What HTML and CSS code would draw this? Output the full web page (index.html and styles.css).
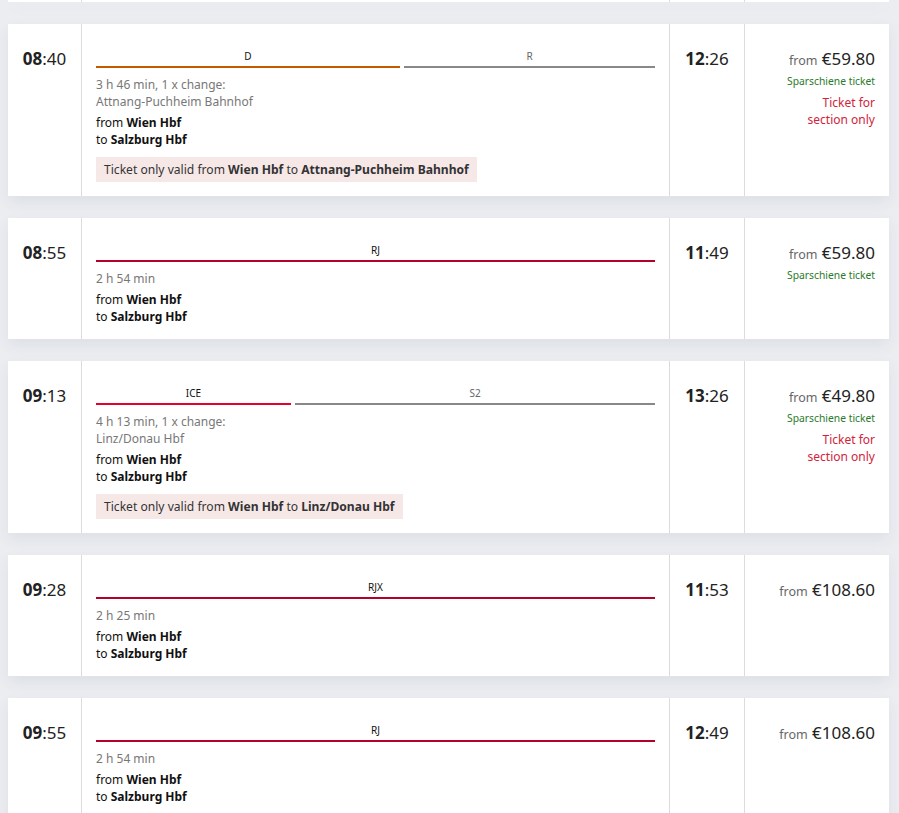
FILE: index.html
```html
<!DOCTYPE html>
<html lang="en">
<head>
    <meta charset="UTF-8">
    <meta name="viewport" content="width=device-width, initial-scale=1.0">
    <title>Connections - Wien Hbf to Salzburg Hbf</title>
    <link rel="stylesheet" href="styles.css">
</head>
<body>
    <div class="results">
        <!-- previous connection, scrolled mostly out of view -->
        <div class="connection connection-stub">
            <div class="col-dep"></div>
            <div class="col-journey"></div>
            <div class="col-arr"></div>
            <div class="col-price"></div>
        </div>

        <div class="connection">
            <div class="col-dep"><b>08</b>:40</div>
            <div class="col-journey">
                <div class="legs">
                    <div class="leg" style="flex: 304;"><span class="leg-name">D</span><span class="leg-bar bar-d"></span></div>
                    <div class="leg" style="flex: 251;"><span class="leg-name muted">R</span><span class="leg-bar bar-grey"></span></div>
                </div>
                <div class="duration">3 h 46 min, 1 x change:<br>Attnang-Puchheim Bahnhof</div>
                <div class="route">from <b>Wien Hbf</b><br>to <b>Salzburg Hbf</b></div>
                <div class="section-note">Ticket only valid from <b>Wien Hbf</b> to <b>Attnang-Puchheim Bahnhof</b></div>
            </div>
            <div class="col-arr"><b>12</b>:26</div>
            <div class="col-price">
                <div class="price"><span class="from">from</span> €59.80</div>
                <div class="offer">Sparschiene ticket</div>
                <div class="partial">Ticket for<br>section only</div>
            </div>
        </div>

        <div class="connection">
            <div class="col-dep"><b>08</b>:55</div>
            <div class="col-journey">
                <div class="legs">
                    <div class="leg" style="flex: 1;"><span class="leg-name">RJ</span><span class="leg-bar bar-rj"></span></div>
                </div>
                <div class="duration">2 h 54 min</div>
                <div class="route">from <b>Wien Hbf</b><br>to <b>Salzburg Hbf</b></div>
            </div>
            <div class="col-arr"><b>11</b>:49</div>
            <div class="col-price">
                <div class="price"><span class="from">from</span> €59.80</div>
                <div class="offer">Sparschiene ticket</div>
            </div>
        </div>

        <div class="connection">
            <div class="col-dep"><b>09</b>:13</div>
            <div class="col-journey">
                <div class="legs">
                    <div class="leg" style="flex: 195;"><span class="leg-name">ICE</span><span class="leg-bar bar-ice"></span></div>
                    <div class="leg" style="flex: 360;"><span class="leg-name muted">S2</span><span class="leg-bar bar-grey"></span></div>
                </div>
                <div class="duration">4 h 13 min, 1 x change:<br>Linz/Donau Hbf</div>
                <div class="route">from <b>Wien Hbf</b><br>to <b>Salzburg Hbf</b></div>
                <div class="section-note">Ticket only valid from <b>Wien Hbf</b> to <b>Linz/Donau Hbf</b></div>
            </div>
            <div class="col-arr"><b>13</b>:26</div>
            <div class="col-price">
                <div class="price"><span class="from">from</span> €49.80</div>
                <div class="offer">Sparschiene ticket</div>
                <div class="partial">Ticket for<br>section only</div>
            </div>
        </div>

        <div class="connection">
            <div class="col-dep"><b>09</b>:28</div>
            <div class="col-journey">
                <div class="legs">
                    <div class="leg" style="flex: 1;"><span class="leg-name">RJX</span><span class="leg-bar bar-rj"></span></div>
                </div>
                <div class="duration">2 h 25 min</div>
                <div class="route">from <b>Wien Hbf</b><br>to <b>Salzburg Hbf</b></div>
            </div>
            <div class="col-arr"><b>11</b>:53</div>
            <div class="col-price">
                <div class="price"><span class="from">from</span> €108.60</div>
            </div>
        </div>

        <div class="connection">
            <div class="col-dep"><b>09</b>:55</div>
            <div class="col-journey">
                <div class="legs">
                    <div class="leg" style="flex: 1;"><span class="leg-name">RJ</span><span class="leg-bar bar-rj"></span></div>
                </div>
                <div class="duration">2 h 54 min</div>
                <div class="route">from <b>Wien Hbf</b><br>to <b>Salzburg Hbf</b></div>
            </div>
            <div class="col-arr"><b>12</b>:49</div>
            <div class="col-price">
                <div class="price"><span class="from">from</span> €108.60</div>
            </div>
        </div>
    </div>
</body>
</html>
```

FILE: styles.css
```css
/* Base */
body {
    font-family: 'Noto Sans', 'Open Sans', sans-serif;
    margin: 0;
    padding: 0;
    background-color: #ebedf1;
    color: #222;
    overflow: hidden;
}

.results {
    padding: 0 10px 0 8px;
    display: flex;
    flex-direction: column;
    gap: 22px;
}

/* One connection card */
.connection {
    display: flex;
    background-color: #fff;
    box-shadow: 0 6px 14px rgba(40, 50, 70, 0.07);
}
.connection-stub {
    height: 2px;
    overflow: hidden;
}

.col-dep, .col-arr {
    flex: 0 0 auto;
    padding-top: 24px;
    font-size: 17px;
    line-height: 22px;
    text-align: center;
    color: #222;
}
.col-dep {
    width: 73px;
    border-right: 1px solid #dcdcdc;
}
.col-arr {
    width: 74px;
    border-left: 1px solid #dcdcdc;
}
.col-dep b, .col-arr b {
    font-weight: 700;
}

.col-journey {
    flex: 1;
    padding: 25px 14px 14px 14px;
}

/* Train legs bar */
.legs {
    display: flex;
    gap: 4px;
}
.leg {
    display: flex;
    flex-direction: column;
    align-items: center;
}
.leg-name {
    font-size: 10px;
    line-height: 14px;
    color: #111;
}
.leg-name.muted {
    color: #666;
}
.leg-bar {
    display: block;
    width: 100%;
    height: 2px;
    margin-top: 3px;
}
.bar-d { background-color: #c25a00; }
.bar-rj { background-color: #b5002c; }
.bar-ice { background-color: #e5002d; }
.bar-grey { background-color: #888; }

.duration {
    margin-top: 8px;
    font-size: 12px;
    line-height: 17px;
    color: #777;
}
.route {
    margin-top: 4px;
    font-size: 12px;
    line-height: 17px;
    color: #111;
}
.section-note {
    display: inline-block;
    margin-top: 9px;
    padding: 4px 8px;
    background-color: #f7e8e8;
    font-size: 12.1px;
    line-height: 17px;
    color: #333;
}

/* Price column */
.col-price {
    width: 130px;
    padding: 24px 14px 14px 0;
    border-left: 1px solid #dcdcdc;
    text-align: right;
}
.price {
    font-size: 17px;
    line-height: 22px;
    color: #222;
}
.price .from {
    font-size: 12.5px;
    color: #666;
}
.offer {
    margin-top: 1px;
    font-size: 10.3px;
    line-height: 16px;
    color: #2a7a2a;
}
.partial {
    margin-top: 5px;
    font-size: 12px;
    line-height: 17px;
    color: #d0243c;
}
```
